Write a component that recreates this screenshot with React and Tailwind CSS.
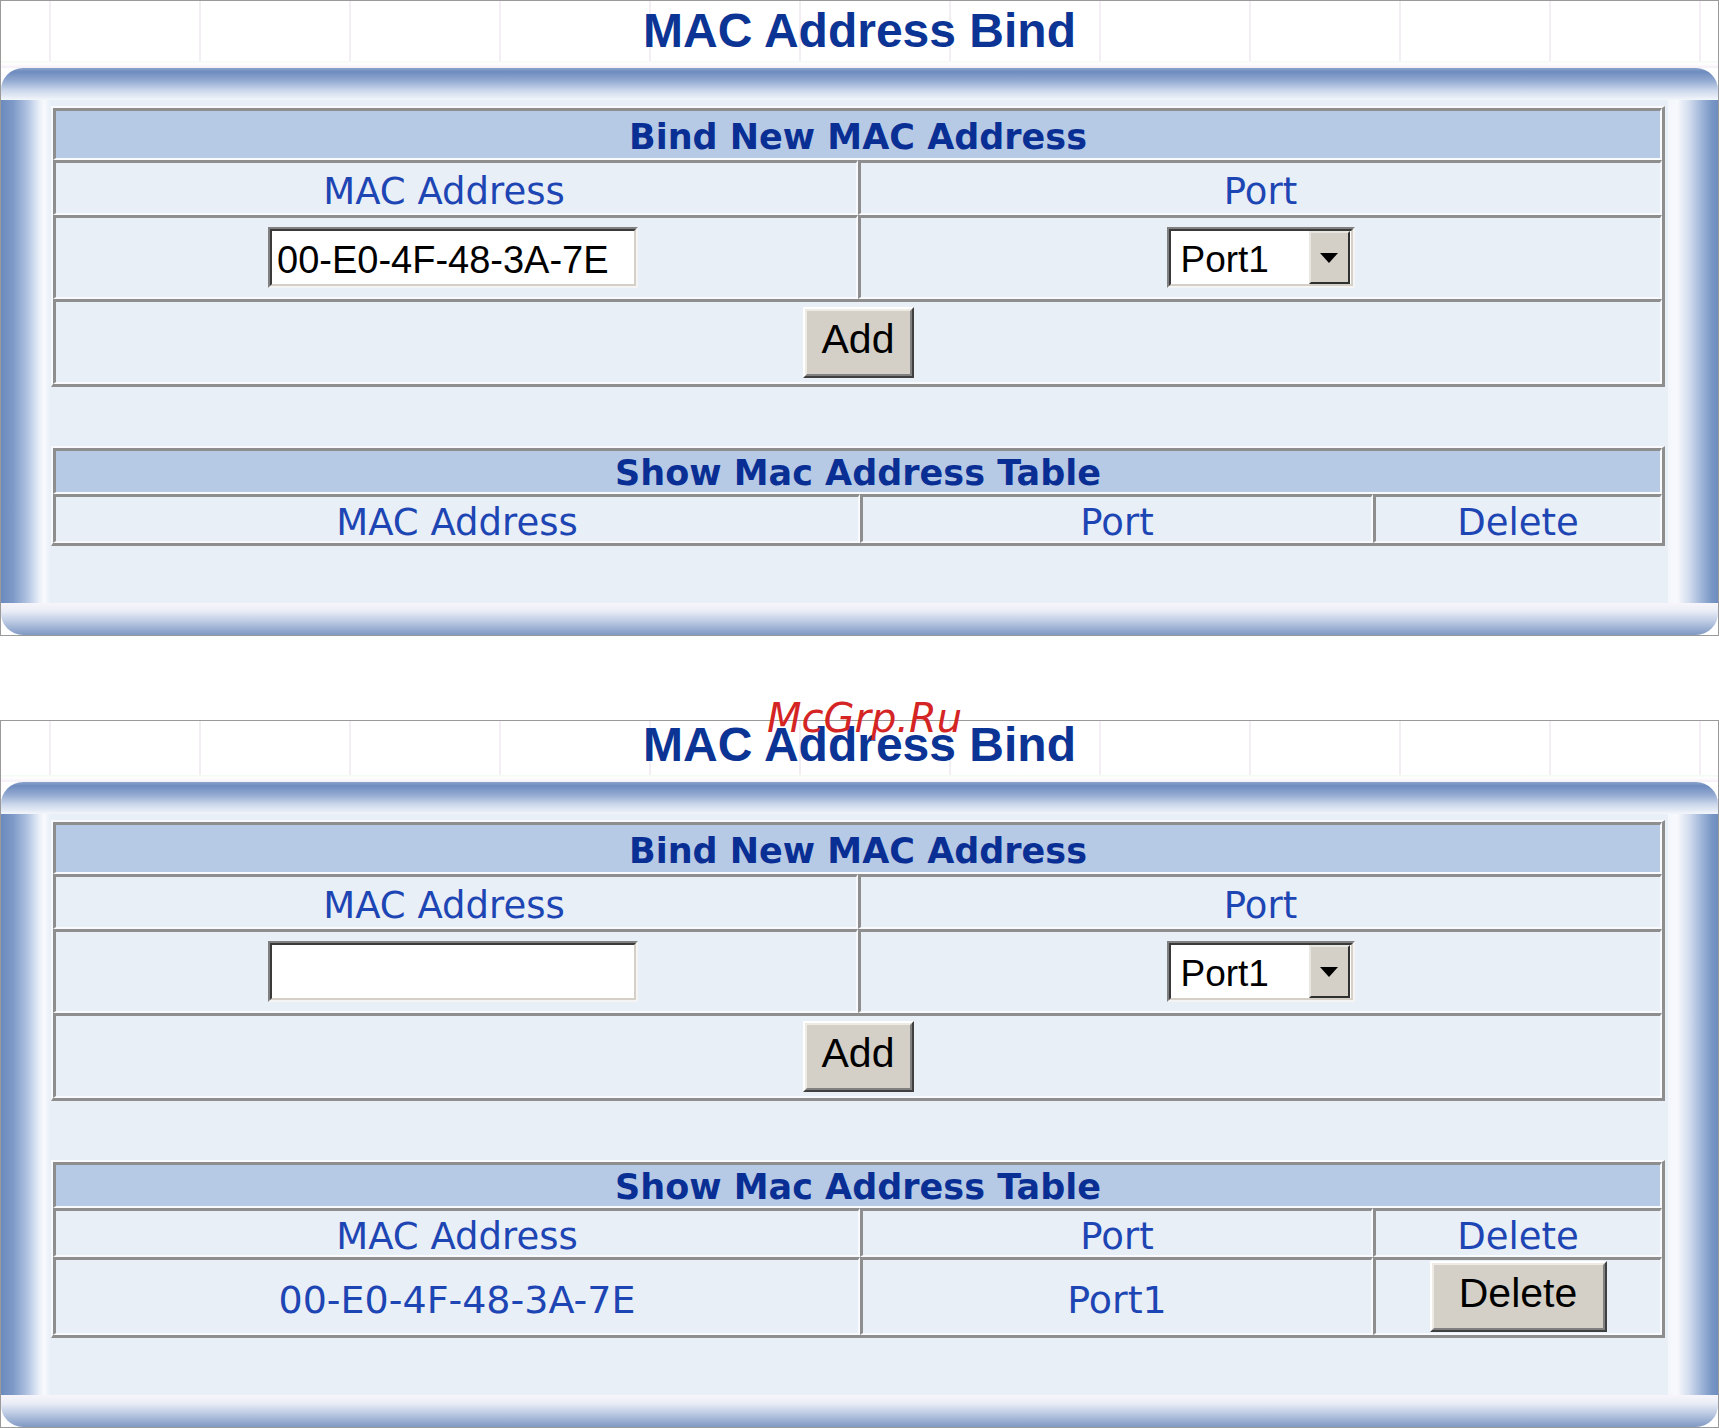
import React from 'react';

const DV = "font-['DejaVu_Sans',sans-serif]";
const LS = "font-['Liberation_Sans',Arial,sans-serif]";

const CELL =
  'border-t-[3px] border-l-[3px] border-b-2 border-r-2 border-t-[#8e8e8e] border-l-[#8e8e8e] border-b-[#f8fafd] border-r-[#f8fafd]';
const TABLE =
  'ml-[1px] w-[1614px] border-t-2 border-l-2 border-b-[3px] border-r-[3px] border-t-[#f8fafd] border-l-[#f8fafd] border-b-[#8e8e8e] border-r-[#8e8e8e] flex flex-col';
const HEAD =
  "h-[46px] bg-[#b6cae6] flex items-center justify-center text-[35px] font-bold text-[#0a2f94] font-['DejaVu_Sans',sans-serif] leading-none";
const LABEL = "text-[37px] text-[#1d45b3] font-['DejaVu_Sans',sans-serif] leading-none";
const DATA = "text-[38px] text-[#1d45b3] font-['DejaVu_Sans',sans-serif] leading-none";

function WinButton({ wide, children }) {
  return (
    <div
      className={`${wide ? 'w-[177px]' : 'w-[111px]'} h-[71px] bg-[#d4d0c8] border-2 border-t-white border-l-white border-b-[#404040] border-r-[#404040]`}
    >
      <div
        className={`h-full border-2 border-t-[#eeebe4] border-l-[#eeebe4] border-b-[#808080] border-r-[#808080] flex items-center justify-center pb-[6px] text-[41px] text-black leading-none ${LS}`}
      >
        {children}
      </div>
    </div>
  );
}

function Inset({ className, children }) {
  return (
    <div
      className={`${className} h-[61px] bg-white border-2 border-t-[#808080] border-l-[#808080] border-b-[#f4f4f4] border-r-[#f4f4f4]`}
    >
      <div className="h-full border-2 border-t-[#3a3a3a] border-l-[#3a3a3a] border-b-[#d4d0c8] border-r-[#d4d0c8] flex items-center">
        {children}
      </div>
    </div>
  );
}

function Panel({ headerH, titlePt, macValue, rows }) {
  return (
    <div className="border border-[#9a9a9a] bg-white">
      <div
        className={`${headerH} ${titlePt} flex justify-center bg-[repeating-linear-gradient(90deg,transparent_0px,transparent_48px,#f2eef3_48px,#f2eef3_50px,transparent_50px,transparent_150px)]`}
      >
        <div className={`text-[48px] leading-none font-bold text-[#0b3495] ${LS}`}>MAC Address Bind</div>
      </div>
      <div className="h-[7px] bg-[linear-gradient(to_bottom,#f2f9f2_0%,#ffffff_40%,#f5eef7_100%)]" />
      <div className="rounded-[22px] overflow-hidden">
        <div className="h-[32px] bg-[linear-gradient(to_bottom,#8aa4cc_0%,#6e8bbf_12%,#93aad1_40%,#cbd7eb_70%,#f3f6fb_100%)]" />
        <div className="flex">
          <div className="w-[49px] bg-[linear-gradient(to_right,#6b8abd_0%,#7e9ac8_25%,#b3c5e2_55%,#e9eff8_78%,#f8fafd_88%,#eaf0f8_100%)]" />
          <div className="w-[1618px] bg-[#e8eff7] pt-[6px] pb-[57px] flex flex-col">
            {/* Bind table */}
            <div className={TABLE}>
              <div className={`${CELL} h-[52px] bg-[#b6cae6] flex items-center justify-center pt-[6px] text-[35px] font-bold text-[#0a2f94] leading-none ${DV}`}>
                Bind New MAC Address
              </div>
              <div className="flex h-[55px]">
                <div className={`${CELL} w-[805px] flex items-center justify-center pt-[6px] pr-[24px]`}>
                  <span className={LABEL}>MAC Address</span>
                </div>
                <div className={`${CELL} flex-1 flex items-center justify-center pt-[6px]`}>
                  <span className={LABEL}>Port</span>
                </div>
              </div>
              <div className="flex h-[84px]">
                <div className={`${CELL} w-[805px] flex items-center justify-center pr-[6px]`}>
                  <Inset className="w-[370px]">
                    <span className={`pl-[5px] pt-[4px] text-[38px] leading-none text-black ${LS}`}>{macValue}</span>
                  </Inset>
                </div>
                <div className={`${CELL} flex-1 flex items-center justify-center`}>
                  <Inset className="w-[188px]">
                    <span className={`flex-1 pl-[10px] pt-[4px] text-[37px] leading-none text-black ${LS}`}>Port1</span>
                    <div className="w-[41px] h-full mr-[1px] bg-[#d4d0c8] border-2 border-t-[#e8e6e0] border-l-[#e8e6e0] border-b-[#303030] border-r-[#303030] flex items-center justify-center">
                      <svg width="18" height="10" viewBox="0 0 18 10">
                        <polygon points="0,0 18,0 9,10" fill="#000" />
                      </svg>
                    </div>
                  </Inset>
                </div>
              </div>
              <div className={`${CELL} h-[85px] flex items-center justify-center`}>
                <WinButton>Add</WinButton>
              </div>
            </div>

            {/* Show table */}
            <div className={`${TABLE} mt-[59px]`}>
              <div className={`${CELL} ${HEAD} pt-[4px]`}>Show Mac Address Table</div>
              <div className="flex h-[49px]">
                <div className={`${CELL} w-[807px] flex items-center justify-center pt-[6px]`}>
                  <span className={LABEL}>MAC Address</span>
                </div>
                <div className={`${CELL} w-[513px] flex items-center justify-center pt-[6px]`}>
                  <span className={LABEL}>Port</span>
                </div>
                <div className={`${CELL} flex-1 flex items-center justify-center pt-[6px]`}>
                  <span className={LABEL}>Delete</span>
                </div>
              </div>
              {rows.map((r) => (
                <div key={r.mac} className="flex h-[78px]">
                  <div className={`${CELL} w-[807px] flex items-center justify-center pt-[6px]`}>
                    <span className={DATA}>{r.mac}</span>
                  </div>
                  <div className={`${CELL} w-[513px] flex items-center justify-center pt-[6px]`}>
                    <span className={DATA}>{r.port}</span>
                  </div>
                  <div className={`${CELL} flex-1 flex items-center justify-center`}>
                    <WinButton wide>Delete</WinButton>
                  </div>
                </div>
              ))}
            </div>
          </div>
          <div className="w-[50px] bg-[linear-gradient(to_right,#f3f6fb_0%,#f7f9fd_18%,#d3ddee_42%,#a3b8da_65%,#7896c4_88%,#6e8cbf_100%)]" />
        </div>
        <div className="h-[32px] bg-[linear-gradient(to_bottom,#f7f5fb_0%,#eaedf6_25%,#c0cde5_55%,#94aacf_85%,#8199c2_100%)]" />
      </div>
    </div>
  );
}

export default function App() {
  return (
    <div className="relative w-[1719px] h-[1428px] bg-white overflow-hidden">
      <Panel headerH="h-[60px]" titlePt="pt-[6px]" macValue="00-E0-4F-48-3A-7E" rows={[]} />
      <div className="h-[84px]" />
      <Panel
        headerH="h-[54px]"
        titlePt="pt-0"
        macValue=""
        rows={[{ mac: '00-E0-4F-48-3A-7E', port: 'Port1' }]}
      />
      <div
        className={`absolute left-[767px] top-[698px] text-[40px] leading-none italic text-[#d42424] ${DV}`}
      >
        McGrp.Ru
      </div>
    </div>
  );
}
